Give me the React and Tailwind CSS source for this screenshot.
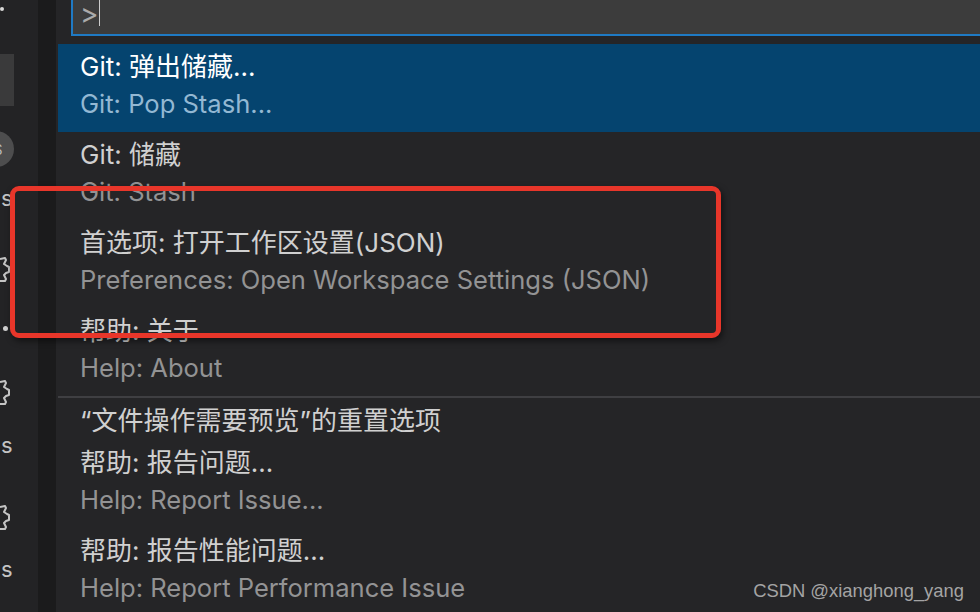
const font = "[font-family:Inter,'Noto_Sans_CJK_SC',sans-serif]";

const rows = [
  { title: 'Git: 弹出储藏...', sub: 'Git: Pop Stash...', active: true },
  { title: 'Git: 储藏', sub: 'Git: Stash' },
  { title: '首选项: 打开工作区设置(JSON)', sub: 'Preferences: Open Workspace Settings (JSON)' },
  { title: '帮助: 关于', sub: 'Help: About' },
];

const rows2 = [
  { title: '帮助: 报告问题...', sub: 'Help: Report Issue...' },
  { title: '帮助: 报告性能问题...', sub: 'Help: Report Performance Issue' },
];

const Row = ({ title, sub, active }) => (
  <div className={`h-[88px] pl-[22px] pt-[4px] leading-[37px] ${active ? 'bg-[#05446f]' : ''}`}>
    <div className={`text-[26px] ${active ? 'text-white' : 'text-[#d0d0d0]'}`}>{title}</div>
    <div className={`text-[25.55px] ${active ? 'text-[#93b8d3]' : 'text-[#939394]'}`}>{sub}</div>
  </div>
);

// right edge of a gear, the rest is cut off by the window
const GearEdge = ({ className }) => (
  <svg width="12" height="26" viewBox="0 0 12 26" fill="none" stroke="#c4c4c4" strokeWidth="2" strokeLinejoin="round" className={className}>
    <path d="M0 2 L5 1 L6 3 L4 7 L7 9 L9 10 L9 15 L6 16 L4 18 L6 22 L5 24 L0 24" />
  </svg>
);

const Letter = ({ className }) => (
  <div className={`h-[24px] pl-[1px] text-[22px] leading-[24px] text-[#c4c4c4] ${className}`}>s</div>
);

const App = () => {
  return (
    <div className={`relative flex h-[612px] w-[980px] overflow-hidden bg-[#252527] ${font}`}>
      <div className="flex w-[38px] shrink-0 flex-col overflow-hidden bg-[#232325]">
        <div className="mt-[7px] h-[4px] w-[4px] rounded-full bg-[#d8d8d8]" />
        <div className="mt-[43px] h-[52px] w-[14px] bg-[#3a3a3b]" />
        <div className="-ml-[22px] mt-[25px] flex h-[36px] w-[36px] shrink-0 items-center justify-center rounded-full bg-[#4d4d4e] pl-[4px] text-[14px] text-[#bbbbbb]">S</div>
        <Letter className="mt-[19px]" />
        <GearEdge className="mt-[47px] shrink-0" />
        <div className="ml-[3px] mt-[43px] h-[5px] w-[5px] rounded-full bg-[#d0d0d0]" />
        <GearEdge className="mt-[49px] shrink-0" />
        <Letter className="mt-[27px]" />
        <GearEdge className="mt-[48px] shrink-0" />
        <Letter className="mt-[26px]" />
      </div>
      <div className="w-[18px] shrink-0 bg-[#1b1b1c]" />
      <div className="w-[2px] shrink-0 bg-[#252527]" />
      <div className="flex-1">
        <div className="h-[44px] pl-[13px]">
          <div className="flex h-[36px] w-full items-start border-b-2 border-l-2 border-[#1f7ac4] bg-[#3c3c3c] pl-[7px] text-[28px] leading-[28px] text-[#aaaaaa]">
            <span>&gt;</span>
            <span className="h-[26px] w-px bg-[#cccccc]" />
          </div>
        </div>
        {rows.map((row) => (
          <Row key={row.sub} {...row} />
        ))}
        <div className="h-[44px] border-t-2 border-[#3f3f42] pl-[22px] pt-[4px] text-[26px] leading-[37px] text-[#d0d0d0]">
          “文件操作需要预览”的重置选项
        </div>
        {rows2.map((row) => (
          <Row key={row.sub} {...row} />
        ))}
      </div>
      {/* red annotation */}
      <div className="absolute left-[10px] top-[186px] h-[152px] w-[711px] rounded-[9px] border-[5px] border-[#e8362a] shadow-[2px_3px_6px_rgba(0,0,0,0.5)]" />
      <div className="absolute right-[16px] bottom-[7px] text-[18.4px] text-[#a4a4a4] [font-family:'Liberation_Sans',sans-serif]">
        CSDN @xianghong_yang
      </div>
    </div>
  );
};

export default App;
